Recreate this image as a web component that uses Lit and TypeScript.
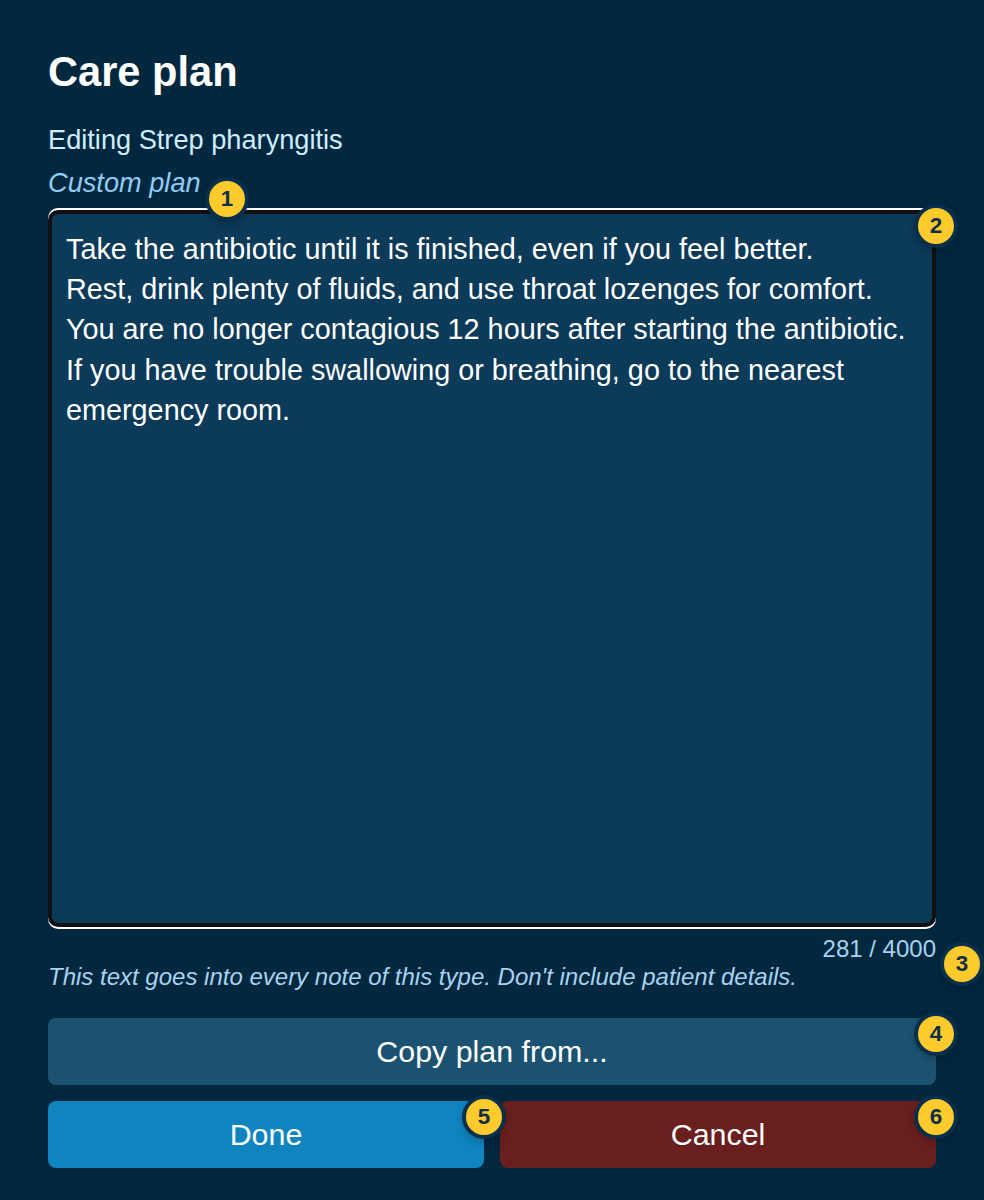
import { LitElement, html, css } from "lit";
import { customElement } from "lit/decorators.js";

const TEXT = `Take the antibiotic until it is finished, even if you feel better.
Rest, drink plenty of fluids, and use throat lozenges for comfort.
You are no longer contagious 12 hours after starting the antibiotic.
If you have trouble swallowing or breathing, go to the nearest emergency room.`;

@customElement("app-root")
export class AppRoot extends LitElement {
  static styles = css`
    :host {
      display: block;
      height: 1200px;
      box-sizing: border-box;
      background: #01283f;
      font-family: "Liberation Sans", Arial, sans-serif;
      padding: 48px 48px 32px;
      color: #fff;
    }
    .wrap { display: flex; flex-direction: column; height: 100%; }
    h1 { margin: 0; font-size: 41.6px; line-height: 48px; font-weight: 700; }
    .sub { margin-top: 28px; font-size: 27.2px; line-height: 31px; color: #d0ecff; }
    .mode { margin-top: 12px; font-size: 27.2px; line-height: 31px; font-style: italic; color: #90cdf4; }
    .field { position: relative; margin-top: 12px; }
    .area {
      box-sizing: border-box;
      height: 717px;
      border-radius: 10px;
      background: #0c3a59;
      border: 4px solid #111;
      box-shadow: 0 -2px 0 #fff, 0 2px 0 #fff;
      padding: 14.6px 14px 14px;
      font-size: 28.8px;
      line-height: 40.32px;
      white-space: pre-wrap;
      color: #fff;
    }
    .count { margin-top: 8px; text-align: right; font-size: 24px; line-height: 28px; color: #a8d2f0; position: relative; }
    .hint { margin-top: 0; font-size: 24px; line-height: 28px; font-style: italic; color: #a8d2f0; }
    button {
      position: relative;
      display: block;
      width: 100%;
      height: 67px;
      flex: none;
      border: 0;
      border-radius: 8px;
      font: inherit;
      font-size: 30.4px;
      color: #fff;
      padding: 0;
    }
    .copy { margin-top: 27px; background: #1b5272; }
    .row { display: grid; grid-template-columns: 1fr 1fr; gap: 16px; margin-top: 16px; }
    .done { background: #0f84bf; }
    .cancel { background: #691f1e; }
    .b {
      position: absolute;
      box-sizing: border-box;
      width: 36px;
      height: 36px;
      border-radius: 50%;
      background: #ffca2c;
      color: #0c2f4a;
      font-size: 22.4px;
      font-weight: 700;
      line-height: 36px;
      text-align: center;
      box-shadow: 0 0 0 4px #08304c, 0 4px 12px rgba(0, 0, 0, 0.4);
      z-index: 2;
    }
    .b1 { left: 161px; top: -29px; }
    .b2 { right: -18px; top: -2px; }
    .b3 { right: -44px; top: 11px; }
    .b4 { right: -18px; top: -2px; }
    .b5 { right: -18px; top: -2px; }
    .b6 { right: -18px; top: -2px; }
  `;
  render() {
    return html`<div class="wrap">
      <h1>Care plan</h1>
      <div class="sub">Editing Strep pharyngitis</div>
      <div class="mode">Custom plan</div>
      <div class="field">
        <div class="area">${TEXT}</div>
        <span class="b b1">1</span>
        <span class="b b2">2</span>
      </div>
      <div class="count">281 / 4000<span class="b b3">3</span></div>
      <div class="hint">This text goes into every note of this type. Don't include patient details.</div>
      <button class="copy">Copy plan from...<span class="b b4">4</span></button>
      <div class="row">
        <button class="done">Done<span class="b b5">5</span></button>
        <button class="cancel">Cancel<span class="b b6">6</span></button>
      </div>
    </div>`;
  }
}
